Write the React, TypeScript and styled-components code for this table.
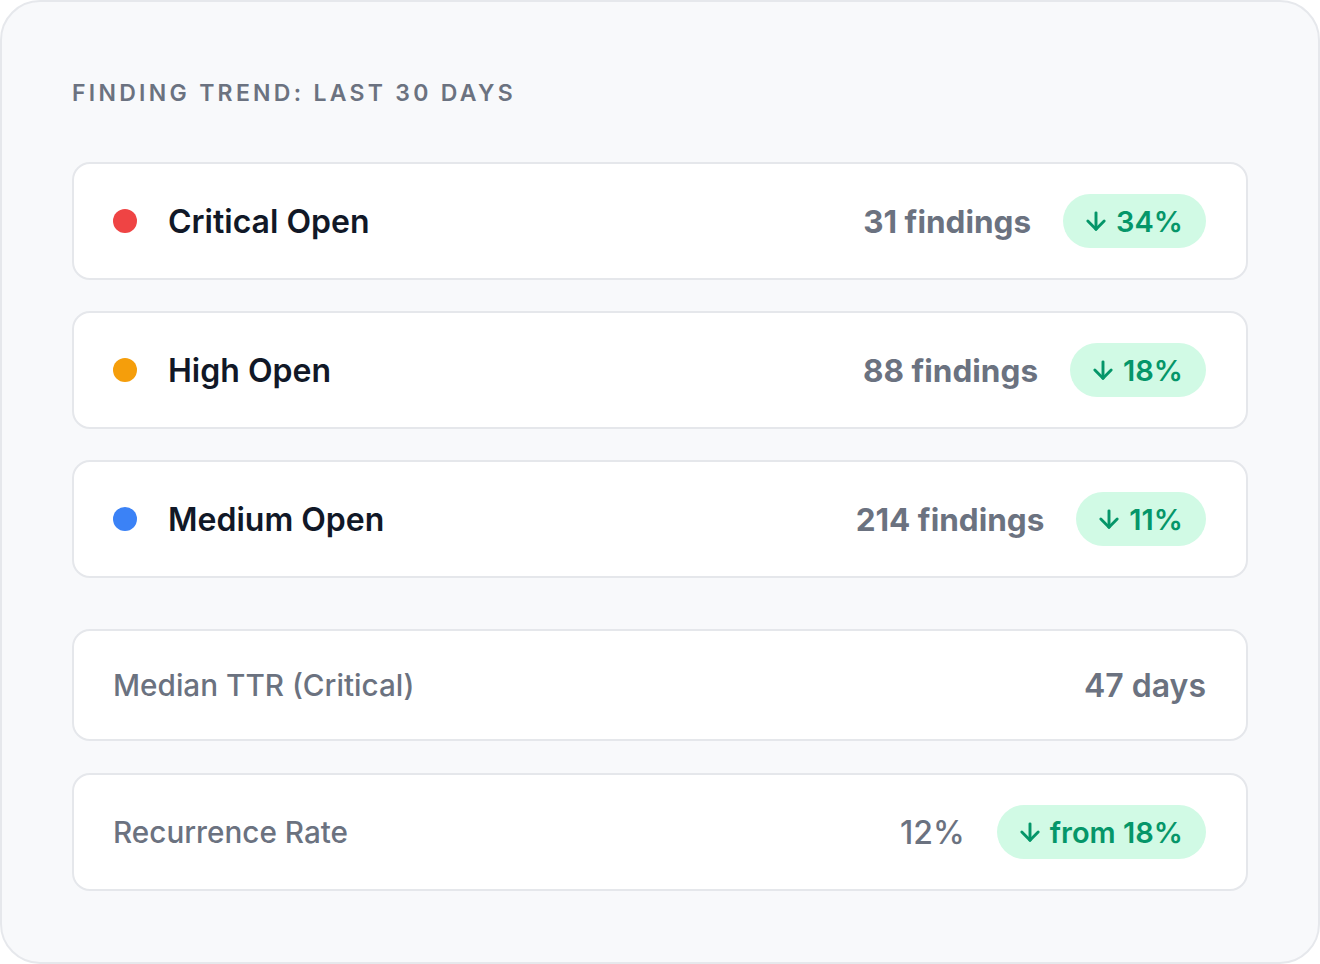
import React from "react";
import styled, { createGlobalStyle } from "styled-components";
import { ArrowDown } from "lucide-react";

const Global = createGlobalStyle`
  * { box-sizing: border-box; }
  html, body { margin: 0; padding: 0; background: #ffffff; }
  body { font-family: Inter, "Noto Sans", sans-serif; -webkit-font-smoothing: antialiased; }
`;

const Card = styled.div`
  width: 1320px;
  height: 964px;
  background: #f8f9fb;
  border: 2px solid #e6e8ec;
  border-radius: 40px;
  padding: 75px 70px 70px;
  display: flex;
  flex-direction: column;
`;

const Title = styled.h2`
  margin: 0 0 53px;
  font-size: 23px;
  line-height: 32px;
  font-weight: 600;
  letter-spacing: 0.143em;
  color: #6b7280;
  text-transform: uppercase;
`;

const List = styled.div`
  display: flex;
  flex-direction: column;
  gap: 31px;
`;

const Row = styled.div<{ $gapTop?: number; $minHeight?: number }>`
  display: flex;
  align-items: center;
  background: #ffffff;
  border: 2px solid #e5e7eb;
  border-radius: 18px;
  padding: 30px 40px 30px 39px;
  min-height: ${(p) => p.$minHeight ?? 118}px;
  margin-top: ${(p) => p.$gapTop ?? 0}px;
`;

const Dot = styled.span<{ $color: string }>`
  width: 24px;
  height: 24px;
  border-radius: 50%;
  background: ${(p) => p.$color};
  flex: none;
  margin-right: 31px;
`;

const Label = styled.span`
  font-size: 32px;
  font-weight: 600;
  color: #111827;
  flex: 1;
`;

const MetricLabel = styled.span`
  font-size: 29.7px;
  font-weight: 500;
  color: #6b7280;
  flex: 1;
`;

const Value = styled.span<{ $weight?: number; $size?: number }>`
  font-size: ${(p) => p.$size ?? 32}px;
  font-weight: ${(p) => p.$weight ?? 600};
  color: #6b7280;
`;

const Badge = styled.span`
  display: inline-flex;
  align-items: center;
  gap: 6px;
  height: 54px;
  padding: 0 23px 0 19px;
  margin-left: 32px;
  border-radius: 999px;
  background: #d1fae5;
  color: #059669;
  font-size: 29px;
  font-weight: 600;
`;

const rows = [
  { label: "Critical Open", color: "#ef4444", count: "31 findings", delta: "34%" },
  { label: "High Open", color: "#f59e0b", count: "88 findings", delta: "18%" },
  { label: "Medium Open", color: "#3b82f6", count: "214 findings", delta: "11%" },
];

export default function App() {
  return (
    <>
      <Global />
      <Card>
        <Title>Finding Trend: Last 30 Days</Title>
        <List>
          {rows.map((r) => (
            <Row key={r.label}>
              <Dot $color={r.color} />
              <Label>{r.label}</Label>
              <Value $size={31.5} $weight={700}>{r.count}</Value>
              <Badge>
                <ArrowDown size={28} strokeWidth={2.5} />
                {r.delta}
              </Badge>
            </Row>
          ))}
          <Row $gapTop={20} $minHeight={112}>
            <MetricLabel>Median TTR (Critical)</MetricLabel>
            <Value>47 days</Value>
          </Row>
          <Row $gapTop={1} $minHeight={117}>
            <MetricLabel>Recurrence Rate</MetricLabel>
            <Value $weight={500}>12%</Value>
            <Badge>
              <ArrowDown size={28} strokeWidth={2.5} />
              from 18%
            </Badge>
          </Row>
        </List>
      </Card>
    </>
  );
}
